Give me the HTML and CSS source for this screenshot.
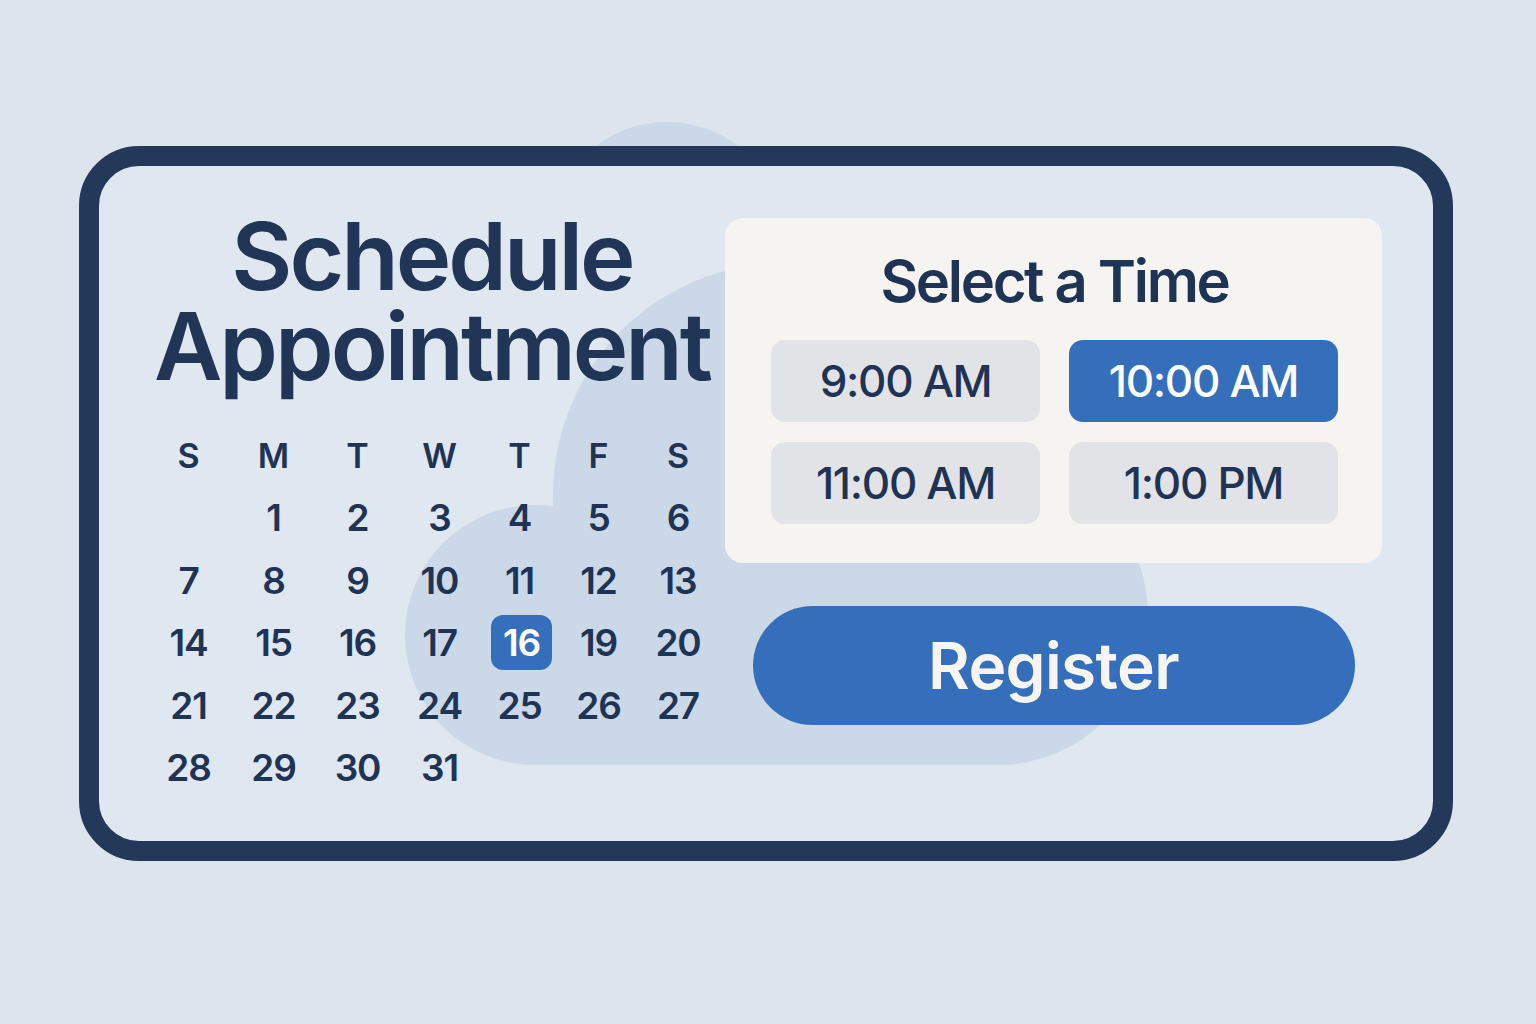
FILE: index.html
```html
<!DOCTYPE html>
<html lang="en">
<head>
<meta charset="utf-8">
<title>Schedule Appointment</title>
<link rel="stylesheet" href="styles.css">
</head>
<body>
<div class="stage">
  <div class="blob-top"></div>
  <div class="card">
    <svg class="cloud" viewBox="99 166 1334 675" preserveAspectRatio="none" aria-hidden="true">
      <circle cx="535" cy="635" r="130"/>
      <circle cx="785" cy="495" r="232"/>
      <circle cx="998" cy="615" r="150"/>
      <rect x="553" y="495" width="445" height="270"/>
      <rect x="535" y="635" width="463" height="130"/>
    </svg>
    <div class="left">
      <h1 class="title"><span class="title-line">Schedule</span><span class="title-line">Appointment</span></h1>
      <div class="calendar">
        <span class="dow">S</span><span class="dow">M</span><span class="dow">T</span><span class="dow">W</span><span class="dow">T</span><span class="dow">F</span><span class="dow">S</span>
        <span></span><span>1</span><span>2</span><span>3</span><span>4</span><span>5</span><span>6</span>
        <span>7</span><span>8</span><span>9</span><span>10</span><span>11</span><span>12</span><span>13</span>
        <span>14</span><span>15</span><span>16</span><span>17</span><span class="sel">16</span><span>19</span><span>20</span>
        <span>21</span><span>22</span><span>23</span><span>24</span><span>25</span><span>26</span><span>27</span>
        <span>28</span><span>29</span><span>30</span><span>31</span>
      </div>
    </div>
    <div class="right">
      <div class="panel">
        <h2 class="panel-title">Select a Time</h2>
        <div class="slots">
          <div class="slot">9:00 AM</div>
          <div class="slot active">10:00 AM</div>
          <div class="slot">11:00 AM</div>
          <div class="slot">1:00 PM</div>
        </div>
      </div>
      <button class="register">Register</button>
    </div>
  </div>
</div>
</body>
</html>
```

FILE: styles.css
```css
html, body {
  margin: 0;
  padding: 0;
}
body {
  background: #dce4ee;
  font-family: "Inter", "Noto Sans", "Liberation Sans", sans-serif;
  color: #1f3354;
  width: 1536px;
  height: 1024px;
  overflow: hidden;
}
.stage {
  position: relative;
  padding: 146px 0 0 79px;
}
.blob-top {
  position: absolute;
  left: 549px;
  top: 122px;
  width: 236px;
  height: 236px;
  border-radius: 50%;
  background: #cad8e7;
}
.card {
  position: relative;
  z-index: 1;
  box-sizing: border-box;
  width: 1374px;
  height: 715px;
  border: 20px solid #243859;
  border-radius: 60px;
  background: #dfe7f0;
  display: flex;
  gap: 7px;
  padding: 52px 51px 0 47px;
}
.cloud {
  position: absolute;
  left: 0;
  top: 0;
  width: 1334px;
  height: 675px;
  fill: #cad8e7;
  z-index: 0;
}
.left, .right {
  position: relative;
  z-index: 1;
}
.left {
  width: 572px;
  flex: none;
}
.title {
  margin: -7px 0 0;
  font-size: 94px;
  font-weight: 600;
  letter-spacing: -0.032em;
  text-align: center;
  color: #213556;
}
.title-line {
  display: block;
  height: 90px;
  line-height: 90px;
}
.calendar {
  margin-top: 33px;
  display: grid;
  grid-template-columns: 85px 85px 83px 81px 79px 79px 80px;
  grid-auto-rows: 62.5px;
  align-items: center;
  justify-items: center;
  font-size: 37px;
  font-weight: 600;
  letter-spacing: -0.03em;
  color: #1f3354;
}
.calendar .dow {
  font-size: 34px;
  font-weight: 600;
  letter-spacing: 0;
}
.calendar .sel {
  display: flex;
  align-items: center;
  justify-content: center;
  width: 61px;
  height: 55px;
  border-radius: 12px;
  background: #356fbb;
  color: #ffffff;
  transform: translateX(2px);
}
.right {
  width: 657px;
  flex: none;
  display: flex;
  flex-direction: column;
  align-items: center;
}
.panel {
  box-sizing: border-box;
  width: 100%;
  background: #f6f4f1;
  border-radius: 18px;
  padding: 28px 44px 39px 46px;
}
.panel-title {
  margin: 0;
  font-size: 58px;
  line-height: 70px;
  font-weight: 600;
  letter-spacing: -0.04em;
  text-align: center;
  color: #1f3354;
}
.slots {
  margin-top: 24px;
  display: grid;
  grid-template-columns: 1fr 1fr;
  column-gap: 29px;
  row-gap: 20px;
}
.slot {
  height: 82px;
  border-radius: 14px;
  background: #e1e3e6;
  display: flex;
  align-items: center;
  justify-content: center;
  font-size: 44px;
  font-weight: 500;
  letter-spacing: -0.03em;
  color: #1f3354;
}
.slot.active {
  background: #356fbb;
  color: #ffffff;
}
.register {
  margin-top: 43px;
  width: 602px;
  height: 119px;
  border: none;
  border-radius: 60px;
  background: #356fbb;
  color: #f7f5f2;
  font-family: inherit;
  font-size: 64px;
  font-weight: 600;
  letter-spacing: -0.01em;
  cursor: pointer;
}
```
